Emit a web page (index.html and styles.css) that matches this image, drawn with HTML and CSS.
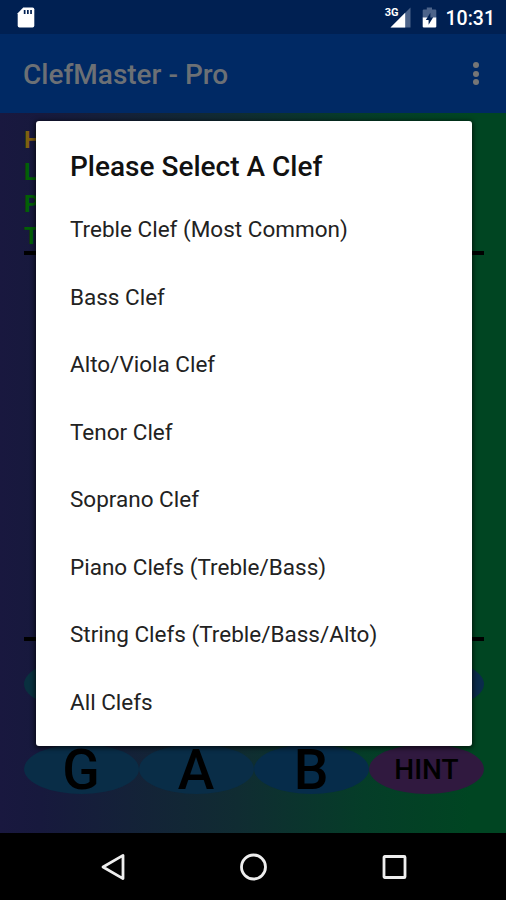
FILE: index.html
```html
<!DOCTYPE html>
<html lang="en">

<head>
    <meta charset="UTF-8">
    <meta name="viewport" content="width=device-width, initial-scale=1.0">
    <title>ClefMaster - Pro</title>
    <link rel="stylesheet" href="styles.css">
</head>

<body>

    <div class="status-bar">
        <svg class="sd-icon" width="18" height="22" viewBox="0 0 18 22">
            <path d="M6.2 0.5H15.5Q17.3 0.5 17.3 2.3V18.7Q17.3 20.5 15.5 20.5H2.5Q0.7 20.5 0.7 18.7V6.2Z" fill="#fff" />
            <path d="M6.8 3h1.7v4H6.8zM10 3h1.7v4H10zM13.2 3h1.7v4h-1.7z" fill="#002052" />
        </svg>
        <div class="status-right">
            <span class="network">3G</span>
            <svg class="signal-icon" width="21" height="21" viewBox="0 0 21 21">
                <path d="M20.5 0.5V20.5H0.5Z" fill="#4d648a" />
                <path d="M15.2 5.8V20.5H0.5Z" fill="#fff" />
            </svg>
            <svg class="battery-icon" width="15" height="21" viewBox="0 0 15 21">
                <path d="M4.8 0.5H10V2.5H13.2Q14.3 2.5 14.3 3.6V11H0.7V3.6Q0.7 2.5 1.8 2.5H4.8Z" fill="#4d648a" />
                <path d="M0.7 10.5H14.3V19.4Q14.3 20.5 13.2 20.5H1.8Q0.7 20.5 0.7 19.4Z" fill="#fff" />
                <path d="M8.4 5.8V10.3H11.2L6.6 17.8V13H3.8Z" fill="#002052" />
            </svg>
            <span class="clock">10:31</span>
        </div>
    </div>

    <div class="app-bar">
        <h1>ClefMaster - Pro</h1>
        <div class="menu-dots">
            <span></span><span></span><span></span>
        </div>
    </div>

    <div class="game">
        <div class="stats">
            <p class="high">H</p>
            <p>L</p>
            <p>P</p>
            <p>T</p>
        </div>
        <div class="staff"></div>
        <div class="notes">
            <button class="teal"></button>
            <button></button>
            <button></button>
            <button class="navy"></button>
            <button>G</button>
            <button>A</button>
            <button class="blue">B</button>
            <button class="hint">HINT</button>
        </div>

        <div class="dialog">
            <h2>Please Select A Clef</h2>
            <ul>
                <li>Treble Clef (Most Common)</li>
                <li>Bass Clef</li>
                <li>Alto/Viola Clef</li>
                <li>Tenor Clef</li>
                <li>Soprano Clef</li>
                <li>Piano Clefs (Treble/Bass)</li>
                <li>String Clefs (Treble/Bass/Alto)</li>
                <li>All Clefs</li>
            </ul>
        </div>
    </div>

    <div class="nav-bar">
        <svg width="28" height="30" viewBox="0 0 28 30">
            <path d="M4 15L24 3.4V26.6Z" fill="none" stroke="#eee" stroke-width="2.8" stroke-linejoin="round" />
        </svg>
        <svg width="28" height="30" viewBox="0 0 28 30">
            <circle cx="14.5" cy="15" r="12" fill="none" stroke="#eee" stroke-width="2.8" />
        </svg>
        <svg width="28" height="30" viewBox="0 0 28 30">
            <rect x="4" y="4.5" width="21" height="21" rx="0.8" fill="none" stroke="#eee" stroke-width="2.8" />
        </svg>
    </div>

</body>

</html>
```

FILE: styles.css
```css
* {
    box-sizing: border-box;
    margin: 0;
    padding: 0;
}

body {
    font-family: Roboto, "Liberation Sans", sans-serif;
    display: flex;
    flex-direction: column;
    height: 900px;
    overflow: hidden;
    background-color: #000;
}

.status-bar {
    display: flex;
    justify-content: space-between;
    height: 34px;
    padding: 7px 11px 0 17px;
    background-color: #002052;
    color: white;
}

.status-right {
    display: flex;
    align-items: flex-start;
}

.network {
    font-size: 11px;
    font-weight: bold;
    line-height: 11px;
    margin-right: -9px;
    z-index: 1;
}

.signal-icon {
    margin-right: 11px;
}

.battery-icon {
    margin-right: 9px;
}

.clock {
    font-size: 19.5px;
    font-weight: 500;
    line-height: 24px;
}

.app-bar {
    display: flex;
    justify-content: space-between;
    align-items: center;
    height: 79px;
    padding: 1px 27.5px 0 23px;
    background-color: #002964;
    color: #6c7075;
}

.app-bar h1 {
    font-size: 28px;
    font-weight: 500;
    line-height: 34px;
    padding-top: 2px;
}

.menu-dots {
    display: flex;
    flex-direction: column;
    gap: 2.5px;
    padding-bottom: 1px;
}

.menu-dots span {
    width: 6px;
    height: 6px;
    border-radius: 50%;
    background-color: #767676;
}

.game {
    position: relative;
    height: 720px;
    padding: 11px 22px 0 24px;
    background: linear-gradient(90deg, #19183f 0%, #17193d 8%, #102c32 47%, #053d28 72%, #004522 93%);
}

.stats {
    height: 127px;
    color: #026006;
    font-size: 24px;
    font-weight: bold;
    line-height: 32px;
}

.stats .high {
    color: #80600f;
}

.staff {
    height: 390px;
    border-top: 4px solid black;
    border-bottom: 4px solid black;
}

.notes {
    display: grid;
    grid-template-columns: repeat(4, 115px);
    grid-auto-rows: 50px;
    row-gap: 35px;
    margin-top: 18px;
}

.notes button {
    padding: 2px 1px 0 0;
    border: none;
    border-radius: 50%;
    background-color: #092d47;
    color: black;
    font-family: inherit;
    font-size: 55px;
    font-weight: 500;
    line-height: 48px;
}

.notes .teal {
    background-color: #09303f;
}

.notes .blue {
    background-color: #062c4a;
}

.notes .navy {
    background-color: #0a2b4b;
}

.notes .hint {
    padding: 2px 0 0;
    background-color: #30193f;
    font-size: 28px;
}

.dialog {
    position: absolute;
    top: 8px;
    left: 36px;
    width: 436px;
    height: 625px;
    padding: 28px 34px;
    border-radius: 3px;
    background-color: white;
    box-shadow: 0 1px 5px 1px rgba(0, 0, 0, 0.7);
}

.dialog h2 {
    font-size: 28px;
    font-weight: 500;
    line-height: 36px;
    color: #111;
}

.dialog ul {
    list-style: none;
    margin-top: 11px;
}

.dialog li {
    height: 67.5px;
    font-size: 22.5px;
    line-height: 67.5px;
    color: #222;
    white-space: nowrap;
}

.nav-bar {
    display: flex;
    justify-content: center;
    align-items: center;
    gap: 112.5px;
    height: 67px;
    background-color: black;
}
```
